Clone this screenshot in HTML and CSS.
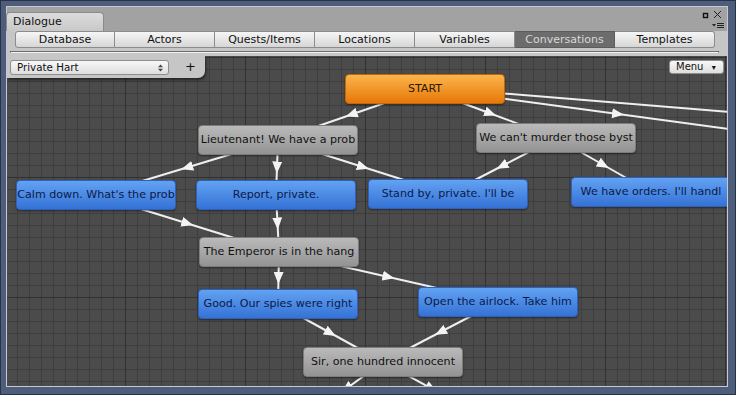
FILE: index.html
```html
<!DOCTYPE html>
<html lang="en">
<head>
    <meta charset="UTF-8">
    <title>Dialogue</title>
    <link rel="stylesheet" href="styles.css">
</head>
<body>
    <div class="panel">
        <!-- Window tab -->
        <div class="tabbar">
            <div class="tab">Dialogue</div>
            <svg class="win-icons" width="26" height="20" viewBox="0 0 26 20">
                <rect x="3.5" y="4.5" width="4" height="4" fill="none" stroke="#111" stroke-width="1.4"/>
                <path d="M14 2 L21 9 M21 2 L14 9" stroke="#222" stroke-width="1"/>
                <path d="M12 15 L16 15 L14 17.5 z" fill="#222"/>
                <path d="M17 14.5 H24 M17 16.5 H24 M17 18.5 H24" stroke="#222" stroke-width="1"/>
            </svg>
        </div>

        <!-- Database sections -->
        <div class="toolbar">
            <button class="tb-btn">Database</button>
            <button class="tb-btn">Actors</button>
            <button class="tb-btn">Quests/Items</button>
            <button class="tb-btn">Locations</button>
            <button class="tb-btn">Variables</button>
            <button class="tb-btn active">Conversations</button>
            <button class="tb-btn">Templates</button>
        </div>
        <div class="separator"><div class="rule"></div></div>

        <!-- Node canvas -->
        <div class="canvas">
            <svg class="links" width="720" height="330" viewBox="0 0 720 330">
                <defs>
                    <marker id="arrow" viewBox="0 0 12 10" refX="6" refY="5" markerWidth="12" markerHeight="10" markerUnits="userSpaceOnUse" orient="auto">
                        <path d="M0,0 L12,5 L0,10 z" fill="#f4f4f4"/>
                    </marker>
                </defs>
                <g class="link">
                    <path d="M418,33 L344.5,58.5 L271,84"/>
                    <path d="M418,33 L483.5,57.5 L549,82"/>
                    <path d="M418,31 L778,60.5 L1138,90"/>
                    <path d="M418,32 L611,58 L804,84"/>
                    <path d="M271,84 L180,111.5 L89,139"/>
                    <path d="M271,84 L270,111.5 L269,139"/>
                    <path d="M271,84 L356,111 L441,138"/>
                    <path d="M549,82 L495,110 L441,138"/>
                    <path d="M549,82 L596.5,109 L644,136"/>
                    <path d="M89,139 L180.5,167.5 L272,196"/>
                    <path d="M269,139 L270.5,167.5 L272,196"/>
                    <path d="M272,196 L271.5,222 L271,248"/>
                    <path d="M272,196 L381.5,221 L491,246"/>
                    <path d="M271,248 L323.5,277 L376,306"/>
                    <path d="M491,246 L433.5,276 L376,306"/>
                    <path d="M376,306 L339.5,332.5 L303,359"/>
                    <path d="M376,306 L424.5,332.5 L473,359"/>
                </g>
            </svg>

            <div class="node start n-start">START</div>
            <div class="node npc n-lieut">Lieutenant! We have a prob</div>
            <div class="node npc n-murder">We can't murder those byst</div>
            <div class="node pc n-calm">Calm down. What's the prob</div>
            <div class="node pc n-report">Report, private.</div>
            <div class="node pc n-standby">Stand by, private. I'll be</div>
            <div class="node pc n-orders">We have orders. I'll handl</div>
            <div class="node npc n-emperor">The Emperor is in the hang</div>
            <div class="node pc n-spies">Good. Our spies were right</div>
            <div class="node pc n-airlock">Open the airlock. Take him</div>
            <div class="node npc n-sir">Sir, one hundred innocent</div>

            <div class="canvas-bar">
                <div class="dropdown">
                    <span>Private Hart</span>
                    <svg width="5" height="8" viewBox="0 0 5 8">
                        <path d="M0 3.2 L2.5 0.5 L5 3.2 z M0 4.8 L2.5 7.5 L5 4.8 z" fill="#444"/>
                    </svg>
                </div>
                <button class="plus">+</button>
            </div>
            <button class="menu-btn">Menu <span class="caret">&#9662;</span></button>
        </div>
    </div>
</body>
</html>
```

FILE: styles.css
```css
body {
    margin: 0;
    width: 736px;
    height: 395px;
    box-sizing: border-box;
    padding: 5px 7px 7px 5px;
    background-color: #4e5d7a;
    border: 1px solid #26314a;
    font-family: 'DejaVu Sans', Verdana, sans-serif;
    color: #111;
    overflow: hidden;
}

.panel {
    height: 100%;
    box-sizing: border-box;
    border: 1px solid #c3cad6;
    background-color: #c6c6c6;
    display: flex;
    flex-direction: column;
}

/* window tab row */
.tabbar {
    height: 24px;
    flex: none;
    background-color: #a2a2a2;
    display: flex;
    align-items: flex-end;
}

.tab {
    margin-left: -1px;
    width: 98px;
    height: 19px;
    box-sizing: border-box;
    padding: 2px 0 0 6px;
    font-size: 11px;
    line-height: 14px;
    background: linear-gradient(#dcdcdc, #c8c8c8);
    border: 1px solid #8a8a8a;
    border-bottom: none;
    border-radius: 4px 4px 0 0;
}

.win-icons {
    margin-left: auto;
    margin-right: 1px;
    align-self: flex-start;
    margin-top: 2px;
}

/* section buttons */
.toolbar {
    flex: none;
    display: flex;
    padding-left: 8px;
    height: 17px;
}

.tb-btn {
    width: 100px;
    height: 17px;
    box-sizing: border-box;
    margin: 0;
    padding: 0;
    font-family: inherit;
    font-size: 11px;
    color: #111;
    background: linear-gradient(#f6f6f6, #d6d6d6);
    border: 1px solid #8c8c8c;
    border-left: none;
}

.tb-btn:first-child {
    border-left: 1px solid #8c8c8c;
    border-radius: 3px 0 0 3px;
}

.tb-btn:last-child {
    border-radius: 0 3px 3px 0;
}

.tb-btn.active {
    background: #6c6c6c;
    color: #d8d8d8;
    border-color: #5c5c5c;
}

.separator {
    flex: none;
    height: 8px;
    display: flex;
    align-items: center;
    padding: 0 8px 0 3px;
}

.rule {
    flex: 1;
    height: 1px;
    background-color: #6e6e6e;
    border-bottom: 1px solid #f2f2f2;
    border-left: 1px solid #555;
    border-right: 1px solid #555;
}

/* node editor canvas */
.canvas {
    flex: 1;
    position: relative;
    overflow: hidden;
    background-color: #4b4b4b;
    background-image:
        linear-gradient(to right, #313131 1px, transparent 1px),
        linear-gradient(to bottom, #313131 1px, transparent 1px),
        linear-gradient(to right, #3e3e3e 1px, transparent 1px),
        linear-gradient(to bottom, #3e3e3e 1px, transparent 1px);
    background-size: 120px 120px, 120px 120px, 12px 12px, 12px 12px;
    background-position: 118px 1px, 118px 1px, 10px 1px, 10px 1px;
}

.links {
    position: absolute;
    left: 0;
    top: 0;
}

.link path {
    fill: none;
    stroke: #efefef;
    stroke-width: 2;
    marker-mid: url(#arrow);
}

.node {
    position: absolute;
    width: 160px;
    height: 30px;
    box-sizing: border-box;
    border-radius: 4px;
    font-size: 11.1px;
    line-height: 28px;
    text-align: center;
    white-space: nowrap;
    overflow: hidden;
    box-shadow: 0 1px 2px rgba(0, 0, 0, 0.45);
}

.start {
    background: linear-gradient(#fbb54c, #e67808);
    border: 1px solid #c46508;
    color: #2a1800;
}

.npc {
    background: linear-gradient(#bababa, #939393);
    border: 1px solid #7c7c7c;
    color: #111;
}

.pc {
    background: linear-gradient(#62a2f2, #3572d6);
    border: 1px solid #2d61bd;
    color: #0c1a48;
}

.n-start   { left: 338px; top: 18px; }
.n-lieut   { left: 191px; top: 69px; }
.n-murder  { left: 469px; top: 67px; }
.n-calm    { left: 9px;   top: 124px; }
.n-report  { left: 189px; top: 124px; }
.n-standby { left: 361px; top: 123px; }
.n-orders  { left: 564px; top: 121px; }
.n-emperor { left: 192px; top: 181px; }
.n-spies   { left: 191px; top: 233px; }
.n-airlock { left: 411px; top: 231px; }
.n-sir     { left: 296px; top: 291px; }

/* overlay controls */
.canvas-bar {
    position: absolute;
    left: 0;
    top: 0;
    width: 198px;
    height: 22px;
    box-sizing: border-box;
    padding: 4px 0 0 3px;
    background-color: #c6c6c6;
    border-radius: 0 0 7px 0;
    box-shadow: 1px 2px 3px rgba(0, 0, 0, 0.5);
    display: flex;
    align-items: flex-start;
}

.dropdown {
    width: 159px;
    height: 15px;
    box-sizing: border-box;
    padding: 0 5px 0 6px;
    background: linear-gradient(#f8f8f8, #dedede);
    border: 1px solid #8e8e8e;
    border-radius: 3px;
    font-size: 10.3px;
    line-height: 13px;
    display: flex;
    align-items: center;
    justify-content: space-between;
}

.plus {
    margin-left: 16px;
    padding: 0;
    background: none;
    border: none;
    font-family: inherit;
    font-size: 13px;
    line-height: 14px;
    color: #111;
}

.menu-btn {
    position: absolute;
    left: 662px;
    top: 4px;
    width: 55px;
    height: 14px;
    box-sizing: border-box;
    padding: 0 0 0 6px;
    text-align: left;
    font-family: inherit;
    font-size: 10px;
    line-height: 12px;
    color: #111;
    background: linear-gradient(#f8f8f8, #dedede);
    border: 1px solid #8e8e8e;
    border-radius: 3px;
}

.caret {
    margin-left: 5px;
    font-size: 8px;
}
```
